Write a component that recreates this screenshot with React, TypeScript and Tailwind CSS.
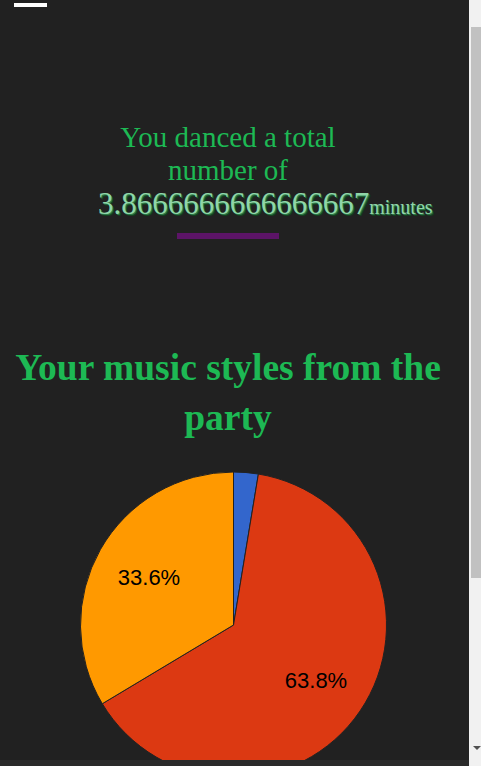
import React from "react";

function polar(cx: number, cy: number, r: number, frac: number) {
  const a = frac * 2 * Math.PI;
  return [cx + r * Math.sin(a), cy - r * Math.cos(a)];
}

function PieChart() {
  const cx = 233.5;
  const cy = 182;
  const r = 153;
  const data = [
    { v: 0.026, color: "#3366cc" },
    { v: 0.638, color: "#dc3912" },
    { v: 0.336, color: "#ff9900" },
  ];
  let acc = 0;
  const paths = data.map((d, i) => {
    const [x1, y1] = polar(cx, cy, r, acc);
    acc += d.v;
    const [x2, y2] = polar(cx, cy, r, acc);
    const large = d.v > 0.5 ? 1 : 0;
    return (
      <path
        key={i}
        d={`M${cx},${cy} L${x1},${y1} A${r},${r} 0 ${large} 1 ${x2},${y2} Z`}
        fill={d.color}
        stroke="#222222"
        strokeWidth={1}
      />
    );
  });
  return (
    <svg width="469" height="317" viewBox="0 0 469 317" className="block">
      {paths}
      <text
        x="149"
        y="142"
        textAnchor="middle"
        fontFamily="'Liberation Sans', Arial, sans-serif"
        fontSize="22"
        fill="#000000"
      >
        33.6%
      </text>
      <text
        x="316"
        y="245"
        textAnchor="middle"
        fontFamily="'Liberation Sans', Arial, sans-serif"
        fontSize="22"
        fill="#000000"
      >
        63.8%
      </text>
    </svg>
  );
}

function Scrollbar() {
  return (
    <div className="w-[12px] h-[766px] shrink-0 bg-[#f1f1f1] flex flex-col">
      <div className="h-[27px]" />
      <div className="ml-[2px] h-[551px] bg-[#c1c1c1]" />
      <div className="flex-1" />
      <div className="h-[20px] flex items-start justify-end">
        <div className="w-0 h-0 border-l-[4px] border-r-[4px] border-t-[4px] border-l-transparent border-r-transparent border-t-[#505050]" />
      </div>
    </div>
  );
}

export default function App() {
  return (
    <div className="flex w-full h-[766px] overflow-hidden bg-[#212121] font-['Liberation_Serif',serif]">
      <div className="flex-1 min-w-0 flex flex-col">
        <div className="h-[760px] overflow-hidden shrink-0">
          <div className="pt-[3px] pl-[14px]">
            <div className="w-[33px] h-[4px] bg-white" />
          </div>
          <div className="ml-[98px] mt-[114px] w-[260px] text-center">
            <p className="text-[29px] leading-[33px] text-[#1db954]">
              You danced a total number of
            </p>
            <div className="h-[33px] leading-[33px] whitespace-nowrap text-left text-[#8fd6a8] [text-shadow:1px_1px_0_#2a7a48,2px_2px_0_#14401f]">
              <span className="text-[31px]">3.8666666666666667</span>
              <span className="text-[20px]">minutes</span>
            </div>
            <div className="mx-auto mt-[13px] w-[102px] h-[6px] bg-[#5c1467]" />
          </div>
          <h1 className="mt-[104px] w-[456px] text-center text-[37.5px] leading-[50px] font-bold text-[#1db954]">
            Your music styles from the party
          </h1>
          <PieChart />
        </div>
        <div className="flex-1 bg-[#2a2a2a]" />
      </div>
      <Scrollbar />
    </div>
  );
}
